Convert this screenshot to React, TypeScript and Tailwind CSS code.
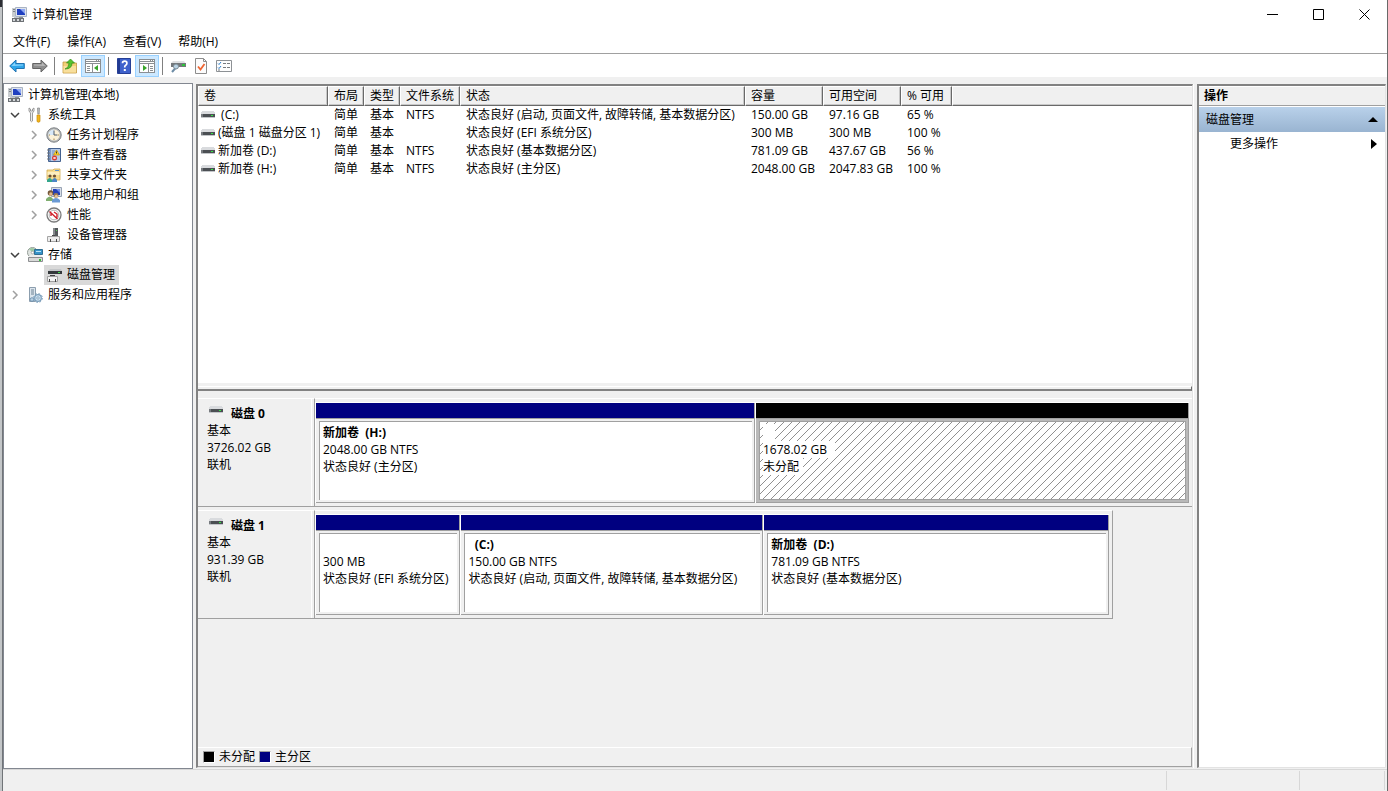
import React, {useState} from "react";

type Volume = {
    name: string,
    layout: string,
    kind: string,
    fs: string,
    status: string,
    capacity: string,
    free: string,
    percent: string
}

type Partition = {
    name: string,
    size: string,
    status: string,
    weight: number,
    allocated: boolean
}

type Disk = {
    name: string,
    kind: string,
    size: string,
    state: string,
    span: number,
    partitions: Partition[]
}

type TreeItem = {
    title: string,
    level: number,
    icon: React.ReactNode,
    chevron?: 'open' | 'closed',
    selected?: boolean
}

const ComputerIcon = () => (
    <svg width="16" height="16" viewBox="0 0 16 16">
        <path d="M1 1h3v9H1z" fill="#c9cdd0"/>
        <path d="M2 2h2v1H2zM2 4h2v1H2z" fill="#7f8589"/>
        <path d="M4.500 .5h11v9h-11z" fill="#dfe4ec" stroke="#a9b3c3"/>
        <path d="M6 2h8v6H6z" fill="#1f3fc0"/>
        <path d="M9 2h5v5z" fill="#8fa8f2"/>
        <path d="M8 10h4v1H8z" fill="#8a8f95"/>
        <path d="M1 11h12v4H1z" fill="#6d7175"/>
        <path d="M2 12h2v2H2zM6 12h2v2H6zM10 12h2v2h-2z" fill="#d5d8db"/>
        <path d="M3 10h5v1H3z" fill="#c3c7ca"/>
    </svg>
);

const ToolsIcon = () => (
    <svg width="16" height="16" viewBox="0 0 16 16">
        <path d="M2 1v3l1.500 2v8q1 1.500 2 0V6L7 4V1L5.500 2v2h-2V2z" fill="#ececec" stroke="#858585" strokeWidth=".8"/>
        <path d="M10.500 1h2l-.3 6h-1.400z" fill="#b9bec2" stroke="#858585" strokeWidth=".7"/>
        <path d="M10 8h3v6.500q-1.500 1.500-3 0z" fill="#f3b51b" stroke="#c98a08" strokeWidth=".7"/>
    </svg>
);

const ClockIcon = () => (
    <svg width="16" height="16" viewBox="0 0 16 16">
        <circle cx="8" cy="8" r="7.200" fill="#b4b7ba" stroke="#7d8083"/>
        <circle cx="8" cy="8" r="5.600" fill="#fbf1d8"/>
        <path d="M8 2.400A5.600 5.600 0 0 0 2.400 8H8z" fill="#d7e8f8"/>
        <path d="M8 3.500V8h3.500" fill="none" stroke="#4e5a68"/>
        <path d="M8 13v-1.500M3 8h1M13 8h-1" stroke="#a68b50"/>
    </svg>
);

const EventIcon = () => (
    <svg width="16" height="16" viewBox="0 0 16 16">
        <path d="M2.500 1.500h12v13h-12z" fill="#b7cbe8" stroke="#43618f"/>
        <path d="M3 2h2v12H3z" fill="#7f9cc9"/>
        <path d="M1 3h3M1 6h3M1 9h3M1 12h3" stroke="#71757a"/>
        <path d="M6 4h3M6 6h2M6 8h2" stroke="#6e8dbd"/>
        <path d="m10.500 3 3 5h-6z" fill="#ffd42a" stroke="#c79207" strokeWidth=".7"/>
        <path d="M10.500 4.500v2" stroke="#333"/>
        <circle cx="8.500" cy="11" r="2.500" fill="#d93a35"/>
        <path d="m7.500 10 2 2m0-2-2 2" stroke="#fff"/>
    </svg>
);

const SharedIcon = () => (
    <svg width="16" height="16" viewBox="0 0 16 16">
        <path d="M1 3h6l1-1h6v11H1z" fill="#f8dd92" stroke="#d3ac52" strokeWidth=".8"/>
        <path d="M9 3h4v1H9z" fill="#5d94cf"/>
        <path d="M1.500 5h12v3h-12z" fill="#fdeebf"/>
        <circle cx="4" cy="9" r="1.600" fill="#6c5036"/>
        <circle cx="8.500" cy="9" r="1.600" fill="#6c5036"/>
        <path d="M1 15v-2q3-4 5 0v2z" fill="#34a78c"/>
        <path d="M6 15v-2q3-4 5 0v2z" fill="#4c86c6"/>
    </svg>
);

const UsersIcon = () => (
    <svg width="16" height="16" viewBox="0 0 16 16">
        <path d="M5.500 .5h10v9h-10z" fill="#d9dfe8" stroke="#98a3b3"/>
        <path d="M7 2h7v6H7z" fill="#2340b8"/>
        <path d="M10 2h4v4z" fill="#7490e2"/>
        <circle cx="4.500" cy="6" r="2.800" fill="#75583b"/>
        <circle cx="10" cy="8.500" r="2.400" fill="#9b7950"/>
        <circle cx="4.800" cy="7" r="1.700" fill="#e3b98a"/>
        <circle cx="10.300" cy="9.300" r="1.500" fill="#e9c69b"/>
        <path d="M0 14v-2q4-5 7 0v2z" fill="#7fae6f"/>
        <path d="M6 15.500V13q4-4 8 0v2.500z" fill="#6b9ad4"/>
    </svg>
);

const GaugeIcon = () => (
    <svg width="16" height="16" viewBox="0 0 16 16">
        <circle cx="8" cy="8" r="7" fill="#f7f7f7" stroke="#7b7b7b" strokeWidth="1.300"/>
        <circle cx="8" cy="8" r="4.800" fill="#fff" stroke="#b9b9b9"/>
        <path d="m3.500 4.500 8 7.500M5 9V5.500M8 5l3 2v3.500" fill="none" stroke="#d01f28" strokeWidth="1.400"/>
    </svg>
);

const DeviceIcon = () => (
    <svg width="16" height="16" viewBox="0 0 16 16">
        <path d="M7 1h5v9H7z" fill="#54585b"/>
        <path d="M7 1h2v9H7z" fill="#85898c"/>
        <path d="M10 3h1v1h-1z" fill="#5fd35f"/>
        <path d="M1.500 9.500h12v5h-12z" fill="#ededed" stroke="#a5a5a5"/>
        <path d="M4 12h1v3H4zM10 12h1v3h-1zM6 8h3v1H6z" fill="#4a4a4a"/>
    </svg>
);

const StorageIcon = () => (
    <svg width="16" height="16" viewBox="0 0 16 16">
        <circle cx="5.500" cy="5.500" r="5" fill="#dfe4e0" stroke="#939b96"/>
        <path d="M5.500 5.500 2 2q3-2 6 0z" fill="#9dc9a3"/>
        <circle cx="5.500" cy="5.500" r="1.300" fill="#fff" stroke="#888" strokeWidth=".6"/>
        <path d="M7.500 2.500h8v5h-8z" fill="#3793c9" stroke="#2f6e93"/>
        <path d="M9 4h5v1H9z" fill="#b9e4f8"/>
        <path d="m3 8-2 2.500h15L14 8z" fill="#ededed"/>
        <path d="M1.500 10.500h14v4h-14z" fill="#d9d9d9" stroke="#8d8f91"/>
        <path d="M12 12h2v2h-2z" fill="#37c337"/>
    </svg>
);

const DiskManageIcon = () => (
    <svg width="16" height="16" viewBox="0 0 16 16">
        <path d="M4 2h11l1 2H2z" fill="#c5c7c9"/>
        <path d="M2 4h14v3H2z" fill="#34383b"/>
        <path d="M12 5h2v1h-2z" fill="#42e04b"/>
        <path d="M1.500 9.500h10v5h-10z" fill="#f3f3f3" stroke="#a0a0a0"/>
        <path d="M3 12h1v3H3zM9 12h1v3H9zM4 8h5v1H4z" fill="#444"/>
    </svg>
);

const ServicesIcon = () => (
    <svg width="16" height="16" viewBox="0 0 16 16">
        <path d="M2.500 .5h6v14h-6z" fill="#dce5ed" stroke="#8c9eae"/>
        <path d="M4 3h3M4 5h3M4 7h3" stroke="#6d8294"/>
        <circle cx="11" cy="11" r="3.300" fill="#cfe2f1" stroke="#7c9fbb" strokeWidth="1.200"/>
        <circle cx="11" cy="11" r="4.400" fill="none" stroke="#7c9fbb" strokeWidth="1" strokeDasharray="1.700 1.750"/>
        <circle cx="11" cy="11" r="1.200" fill="#fff" stroke="#5f88a9" strokeWidth=".7"/>
        <circle cx="5" cy="12.500" r="1.800" fill="#b9d0e2" stroke="#5f88a9" strokeWidth=".8"/>
    </svg>
);

const DriveIcon = () => (
    <svg width="14" height="8" viewBox="0 0 14 8" className="shrink-0" shapeRendering="crispEdges">
        <path d="M1 0h12v1h1v2H0V1h1z" fill="#d9dbde"/>
        <path d="M0 3h14v3H0z" fill="#4b4f53"/>
        <path d="M0 3h2v3H0z" fill="#777b7f"/>
        <path d="M0 6h14v1H0z" fill="#c3c6c9"/>
        <path d="M10 4h2v1h-2z" fill="#35e845"/>
    </svg>
);

const BackIcon = () => (
    <svg width="16" height="16" viewBox="0 0 16 16">
        <path d="M.7 8 7 2v3.500h8.300v5H7V14z" fill="#2fa6ea" stroke="#2273b1"/>
        <path d="M2.500 8 6 4.500v2h8v1z" fill="#8fd5fb"/>
    </svg>
);

const ForwardIcon = () => (
    <svg width="16" height="16" viewBox="0 0 16 16">
        <path d="M15.300 8 9 2v3.500H.7v5H9V14z" fill="#8f8f8f" stroke="#646464"/>
        <path d="M13.500 8 10 4.500v2H2v1z" fill="#b9b9b9"/>
    </svg>
);

const UpFolderIcon = () => (
    <svg width="16" height="16" viewBox="0 0 16 16">
        <path d="M1 4h5l1 1h7.500v10H1z" fill="#f2cf77" stroke="#c39a43" strokeWidth=".8"/>
        <path d="M1.500 8H14v6.500H1.500z" fill="#f8df9c"/>
        <path d="M3 11q4-1 4-6H4.500l4-4 4 4H10q0 6-7 6z" fill="#55c32f" stroke="#2f8c17" strokeWidth=".7"/>
    </svg>
);

const TreePaneIcon = () => (
    <svg width="16" height="14" viewBox="0 0 16 14" shapeRendering="crispEdges">
        <path d="M0 0h16v14H0z" fill="#8a8e92"/>
        <path d="M1 1h10v1H1zM1 3h14v1H1zM1 5h6v8H1zM8 5h7v8H8z" fill="#fff"/>
        <path d="M12 1h1v1h-1zM14 1h1v1h-1z" fill="#fff"/>
        <path d="M2 7h3v1H2zM2 9h3v1H2zM2 11h3v1H2z" fill="#8a8e92"/>
        <path d="M13 6v6L9 9z" fill="#38a52b" shapeRendering="auto"/>
    </svg>
);

const ActionPaneIcon = () => (
    <svg width="16" height="14" viewBox="0 0 16 14" shapeRendering="crispEdges">
        <path d="M0 0h16v14H0z" fill="#8a8e92"/>
        <path d="M1 1h10v1H1zM1 3h14v1H1zM1 5h8v8H1zM10 5h5v8h-5z" fill="#fff"/>
        <path d="M12 1h1v1h-1zM14 1h1v1h-1z" fill="#fff"/>
        <path d="M11 7h3v1h-3zM11 9h3v1h-3zM11 11h3v1h-3z" fill="#8a8e92"/>
        <path d="M4 6v6l4-3z" fill="#38a52b" shapeRendering="auto"/>
    </svg>
);

const HelpIcon = () => (
    <svg width="14" height="16" viewBox="0 0 14 16">
        <path d="M.5 .5h13v15H.5z" fill="#3f62cc" stroke="#263f96"/>
        <path d="M1 1h2v14H1z" fill="#213a92"/>
        <path d="M5.500 5.200q0-2 2.200-2t2.200 2q0 1.300-1.200 2t-1 2.300" fill="none" stroke="#fff" strokeWidth="1.700"/>
        <path d="M6.800 11h2v2h-2z" fill="#fff"/>
    </svg>
);

const ConnectIcon = () => (
    <svg width="16" height="16" viewBox="0 0 16 16">
        <path d="M3 3h11l1.500 2H1z" fill="#dfe1e3"/>
        <path d="M1 5h15v4H1z" fill="#74787c"/>
        <path d="M12 6h3v2h-3z" fill="#2fc23c"/>
        <path d="M6 9.500 2 14" stroke="#6d8ca6" strokeWidth="2"/>
        <circle cx="6" cy="8.500" r="2.500" fill="#b9d3e4" stroke="#7d8c97"/>
    </svg>
);

const CheckPageIcon = () => (
    <svg width="14" height="16" viewBox="0 0 14 16">
        <path d="M1.500 .5h8l3 3v12h-11z" fill="#fcfcfc" stroke="#8d8d8d"/>
        <path d="M9.500 .5v3h3" fill="none" stroke="#8d8d8d"/>
        <path d="m4 8.500 2.500 3L10.500 6" fill="none" stroke="#ee6431" strokeWidth="1.800"/>
    </svg>
);

const CheckListIcon = () => (
    <svg width="16" height="14" viewBox="0 0 16 14">
        <path d="M.5 1.500h15v11H.5z" fill="#fdfdfd" stroke="#8d9195"/>
        <path d="m2 4.500 1 1 2-2.500M2 8.500l1 1 2-2.500" fill="none" stroke="#2c7fcb"/>
        <path d="M7 4.500h3M11 4.500h3M7 8.500h3M11 8.500h3M2 11h2" stroke="#777b7f"/>
    </svg>
);

const Chevron = ({state}: {state?: 'open' | 'closed'}) => (
    <svg width="10" height="10" viewBox="0 0 10 10" className="shrink-0">
        {state === 'open' && <path d="m1 3 4 4 4-4" fill="none" stroke="#404040" strokeWidth="1.500"/>}
        {state === 'closed' && <path d="m3 1 4 4-4 4" fill="none" stroke="#a0a0a0" strokeWidth="1.500"/>}
    </svg>
);

const treeItems: TreeItem[] = [
    {title: '计算机管理(本地)', level: 0, icon: <ComputerIcon/>},
    {title: '系统工具', level: 1, icon: <ToolsIcon/>, chevron: 'open'},
    {title: '任务计划程序', level: 2, icon: <ClockIcon/>, chevron: 'closed'},
    {title: '事件查看器', level: 2, icon: <EventIcon/>, chevron: 'closed'},
    {title: '共享文件夹', level: 2, icon: <SharedIcon/>, chevron: 'closed'},
    {title: '本地用户和组', level: 2, icon: <UsersIcon/>, chevron: 'closed'},
    {title: '性能', level: 2, icon: <GaugeIcon/>, chevron: 'closed'},
    {title: '设备管理器', level: 2, icon: <DeviceIcon/>},
    {title: '存储', level: 1, icon: <StorageIcon/>, chevron: 'open'},
    {title: '磁盘管理', level: 2, icon: <DiskManageIcon/>, selected: true},
    {title: '服务和应用程序', level: 1, icon: <ServicesIcon/>, chevron: 'closed'}
];

const volumes: Volume[] = [
    {name: ' (C:)', layout: '简单', kind: '基本', fs: 'NTFS', status: '状态良好 (启动, 页面文件, 故障转储, 基本数据分区)', capacity: '150.00 GB', free: '97.16 GB', percent: '65 %'},
    {name: '(磁盘 1 磁盘分区 1)', layout: '简单', kind: '基本', fs: '', status: '状态良好 (EFI 系统分区)', capacity: '300 MB', free: '300 MB', percent: '100 %'},
    {name: '新加卷 (D:)', layout: '简单', kind: '基本', fs: 'NTFS', status: '状态良好 (基本数据分区)', capacity: '781.09 GB', free: '437.67 GB', percent: '56 %'},
    {name: '新加卷 (H:)', layout: '简单', kind: '基本', fs: 'NTFS', status: '状态良好 (主分区)', capacity: '2048.00 GB', free: '2047.83 GB', percent: '100 %'}
];

const disks: Disk[] = [
    {
        name: '磁盘 0', kind: '基本', size: '3726.02 GB', state: '联机', span: 100,
        partitions: [
            {name: '新加卷  (H:)', size: '2048.00 GB NTFS', status: '状态良好 (主分区)', weight: 440, allocated: true},
            {name: '    ', size: '1678.02 GB', status: '未分配', weight: 434, allocated: false}
        ]
    },
    {
        name: '磁盘 1', kind: '基本', size: '931.39 GB', state: '联机', span: 91,
        partitions: [
            {name: ' ', size: '300 MB', status: '状态良好 (EFI 系统分区)', weight: 145, allocated: true},
            {name: '  (C:)', size: '150.00 GB NTFS', status: '状态良好 (启动, 页面文件, 故障转储, 基本数据分区)', weight: 303, allocated: true},
            {name: '新加卷  (D:)', size: '781.09 GB NTFS', status: '状态良好 (基本数据分区)', weight: 346, allocated: true}
        ]
    }
];

const columns = [
    {title: '卷', width: 'w-[130px]'},
    {title: '布局', width: 'w-[36px]'},
    {title: '类型', width: 'w-[36px]'},
    {title: '文件系统', width: 'w-[60px]'},
    {title: '状态', width: 'w-[285px]'},
    {title: '容量', width: 'w-[78px]'},
    {title: '可用空间', width: 'w-[78px]'},
    {title: '% 可用', width: 'w-[51px]'}
];

const levelPadding = ['pl-[3px]', 'pl-[6px]', 'pl-[25px]'];

const TitleBar = () => (
    <header className="flex h-[30px] items-center bg-white pl-2">
        <ComputerIcon/>
        <h1 className="flex-1 pl-[5px]">计算机管理</h1>
        <button type="button" aria-label="最小化" className="flex h-7 w-[46px] items-center justify-center self-start">
            <svg width="11" height="11" viewBox="0 0 11 11"><path d="M0 5.500h11" stroke="#000"/></svg>
        </button>
        <button type="button" aria-label="最大化" className="flex h-7 w-[46px] items-center justify-center self-start">
            <svg width="11" height="11" viewBox="0 0 11 11"><path d="M.5 .5h10v10H.5z" fill="none" stroke="#000"/></svg>
        </button>
        <button type="button" aria-label="关闭" className="flex h-7 w-[46px] items-center justify-center self-start">
            <svg width="11" height="11" viewBox="0 0 11 11"><path d="m.5 .5 10 10m0-10-10 10" stroke="#000"/></svg>
        </button>
    </header>
);

const MenuBar = () => (
    <nav className="flex h-6 items-center gap-[17px] border-b border-[#a0a0a0] bg-white px-[10px]">
        {['文件(F)', '操作(A)', '查看(V)', '帮助(H)'].map(title => (
            <button key={title} type="button">{title}</button>
        ))}
    </nav>
);

const ToolButton = ({label, active, children}: {label: string, active?: boolean, children: React.ReactNode}) => (
    <button type="button" aria-label={label} className={active
        ? 'flex h-[22px] w-6 items-center justify-center border border-[#99d1ff] bg-[#cce8ff]'
        : 'flex h-[22px] w-[23px] items-center justify-center'}>
        {children}
    </button>
);

const ToolSeparator = () => <span className="mx-[3px] h-[18px] w-px bg-[#808080]"/>;

const ToolBar = () => (
    <div className="flex h-[23px] items-center bg-white pl-[2px]">
        <ToolButton label="后退"><BackIcon/></ToolButton>
        <ToolButton label="前进"><ForwardIcon/></ToolButton>
        <ToolSeparator/>
        <ToolButton label="上一级"><UpFolderIcon/></ToolButton>
        <ToolButton label="显示/隐藏控制台树" active><TreePaneIcon/></ToolButton>
        <ToolSeparator/>
        <ToolButton label="帮助"><HelpIcon/></ToolButton>
        <ToolButton label="显示/隐藏操作窗格" active><ActionPaneIcon/></ToolButton>
        <ToolSeparator/>
        <ToolButton label="连接"><ConnectIcon/></ToolButton>
        <ToolButton label="属性"><CheckPageIcon/></ToolButton>
        <ToolButton label="列表"><CheckListIcon/></ToolButton>
    </div>
);

const Tree = ({selected, onSelect}: {selected: string, onSelect: (title: string) => void}) => (
    <aside className="w-[190px] shrink-0 border border-[#828790] bg-white pt-px">
        <ul>
            {treeItems.map(item => (
                <li key={item.title} className={`flex h-5 items-center ${levelPadding[item.level]}`}>
                    {item.level > 0 && <Chevron state={item.chevron}/>}
                    <button
                        type="button"
                        onClick={() => onSelect(item.title)}
                        className={`flex h-5 items-center gap-[5px] pr-1 ${item.level > 0 ? 'ml-[5px] pl-[2px]' : ''} ${item.title === selected ? 'bg-[#d9d9d9]' : ''}`}
                    >
                        {item.icon}
                        {item.title}
                    </button>
                </li>
            ))}
        </ul>
    </aside>
);

const VolumeTable = () => (
    <div className="h-[297px] shrink-0 overflow-hidden bg-white">
        <table className="w-full table-fixed border-separate border-spacing-0">
            <thead>
                <tr className="h-5 bg-[#f0f0f0] text-left">
                    {columns.map(c => (
                        <th key={c.title} className={`${c.width} h-5 border-t border-r border-b border-l border-t-white border-r-[#696969] border-b-[#696969] border-l-white p-0 pl-[5px] font-normal whitespace-nowrap shadow-[inset_-1px_-1px_0_#c8c8c8]`}>{c.title}</th>
                    ))}
                    <th aria-label="空" className="h-5 border-t border-b border-l border-t-white border-b-[#696969] border-l-white p-0 shadow-[inset_0_-1px_0_#c8c8c8]"/>
                </tr>
            </thead>
            <tbody>
                {volumes.map(v => (
                    <tr key={v.name} className="h-[18px] whitespace-pre [&>td]:p-0 [&>td]:pl-[6px]">
                        <td>
                            <span className="-ml-[3px] flex items-center gap-[3px]"><DriveIcon/>{v.name}</span>
                        </td>
                        <td>{v.layout}</td>
                        <td>{v.kind}</td>
                        <td>{v.fs}</td>
                        <td>{v.status}</td>
                        <td>{v.capacity}</td>
                        <td>{v.free}</td>
                        <td>{v.percent}</td>
                        <td/>
                    </tr>
                ))}
            </tbody>
        </table>
    </div>
);

const Hatch = () => (
    <svg className="absolute inset-0 h-full w-full" shapeRendering="crispEdges">
        <defs>
            <pattern id="hatch" width="8" height="8" patternUnits="userSpaceOnUse">
                <path d="M7 0h1v1H7zM6 1h1v1H6zM5 2h1v1H5zM4 3h1v1H4zM3 4h1v1H3zM2 5h1v1H2zM1 6h1v1H1zM0 7h1v1H0z" fill="#909090"/>
            </pattern>
        </defs>
        <rect width="100%" height="100%" fill="url(#hatch)"/>
    </svg>
);

const PartitionBox = ({partition}: {partition: Partition}) => {
    const {name, size, status, weight, allocated} = partition;

    return (
        <div style={{flexGrow: weight}} className="flex min-w-0 basis-0 flex-col border-t border-l border-white">
            <div className={`h-4 border-r border-b border-[#a0a0a0] ${allocated ? 'bg-[#000080]' : 'bg-black'}`}/>
            <div className={`flex flex-1 flex-col border-r border-b border-[#a0a0a0] p-[2px] pl-[3px] ${allocated ? 'bg-[#f0f0f0]' : 'bg-[#b9b9b9]'}`}>
                <div className={`relative flex flex-1 flex-col items-start overflow-hidden border-t border-l border-[#a0a0a0] bg-white pt-[2px] pl-[3px] leading-[17px] whitespace-pre ${allocated ? '' : 'border-r border-b'}`}>
                    {!allocated && <Hatch/>}
                    <strong className="relative min-h-[17px] bg-white">{name}</strong>
                    <span className="relative bg-white pr-2">{size}</span>
                    <span className="relative bg-white pr-1">{status}</span>
                </div>
            </div>
        </div>
    );
};

const DiskRow = ({disk}: {disk: Disk}) => (
    <section className="flex h-[112px] pb-[3px]">
        <div className="w-[117px] shrink-0 border-t border-r border-b border-t-white border-r-[#a0a0a0] border-b-[#a0a0a0] pt-[6px] pl-[9px] leading-[17px] shadow-[inset_-2px_0_0_#f0f0f0,inset_-3px_0_0_#fff]">
            <h2 className="flex gap-2 pt-px pl-[2px] leading-4 font-bold"><DriveIcon/>{disk.name}</h2>
            <p>{disk.kind}</p>
            <p>{disk.size}</p>
            <p>{disk.state}</p>
        </div>
        <div className="flex min-w-0 flex-1">
            <div style={{width: `${disk.span}%`}} className={`flex border-t border-b border-t-white border-b-[#a0a0a0] pt-[3px] pr-[3px] pb-[3px] ${disk.span < 100 ? 'border-r border-r-[#a0a0a0]' : ''}`}>
                {disk.partitions.map(p => <PartitionBox key={p.size} partition={p}/>)}
            </div>
        </div>
    </section>
);

const Legend = () => (
    <footer className="flex h-5 items-center gap-1 border-t border-r border-b border-t-white border-r-[#a0a0a0] border-b-[#a0a0a0] pl-[5px]">
        <span className="h-3 w-3 border border-t-[#a0a0a0] border-r-white border-b-white border-l-[#a0a0a0] bg-black"/>
        <span>未分配</span>
        <span className="h-3 w-3 border border-t-[#a0a0a0] border-r-white border-b-white border-l-[#a0a0a0] bg-[#000080]"/>
        <span>主分区</span>
    </footer>
);

const ActionsPane = () => (
    <aside className="my-px w-[189px] shrink-0 border-t-2 border-r border-b border-l-2 border-t-[#828282] border-r-[#e3e3e3] border-b-[#e3e3e3] border-l-[#828282] bg-white">
        <h2 className="h-5 border-t border-b border-t-white border-b-[#a0a0a0] bg-[#f0f0f0] pl-[5px] font-bold leading-[18px]">操作</h2>
        <button type="button" className="mt-px flex h-[25px] w-full items-center justify-between bg-linear-to-b from-[#b9d1ea] to-[#99b4d1] pr-[7px] pl-[7px]">
            磁盘管理
            <svg width="10" height="5" viewBox="0 0 10 5"><path d="m5 0 5 5H0z"/></svg>
        </button>
        <button type="button" className="flex h-6 w-full items-center justify-between pr-2 pl-[31px]">
            更多操作
            <svg width="6" height="10" viewBox="0 0 6 10"><path d="M0 0v10l6-5z"/></svg>
        </button>
    </aside>
);

const StatusBar = () => (
    <footer className="flex h-[22px] border-t border-[#d7d7d7] py-px">
        <span className="flex-1 border-r border-[#d7d7d7]"/>
        <span className="w-[133px] border-r border-[#d7d7d7]"/>
        <span className="mr-[2px] w-[85px] border-r border-[#d7d7d7]"/>
    </footer>
);

const App = () => {
    const [selected, setSelected] = useState<string>('磁盘管理');

    return (
        <div className="flex min-h-screen bg-[#f0f0f0] font-['Open_Sans','Noto_Sans_CJK_SC',sans-serif] text-[12px] leading-[18px] text-black">
            <div className="w-[3px] shrink-0 border-r border-[#707478] bg-[#c3c6c8]">
                <div className="h-[7px] bg-[#2b2d33]"/>
            </div>
            <div className="flex min-w-0 flex-1 flex-col border-r border-[#696969]">
                <TitleBar/>
                <MenuBar/>
                <ToolBar/>
                <main className="flex flex-1 pt-[6px] pr-px">
                    <Tree selected={selected} onSelect={setSelected}/>
                    <div className="my-px mr-1 ml-[3px] flex min-w-0 flex-1 flex-col border-t-2 border-r border-b border-l-2 border-t-[#828282] border-r-[#e3e3e3] border-b-[#e3e3e3] border-l-[#828282] shadow-[1px_0_0_#fff]">
                        <VolumeTable/>
                        <div className="mt-[3px] h-[5px] border-t border-b-2 border-r border-t-white border-r-[#696969] border-b-[#828282]"/>
                        <div className="flex-1 pt-[7px]">
                            {disks.map(d => <DiskRow key={d.name} disk={d}/>)}
                        </div>
                        <Legend/>
                    </div>
                    <ActionsPane/>
                </main>
                <StatusBar/>
            </div>
        </div>
    );
};

export default App;
